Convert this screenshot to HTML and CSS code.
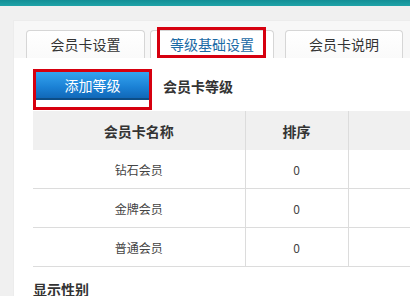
FILE: index.html
```html
<!DOCTYPE html>
<html lang="zh-CN">
<head>
	<meta charset="UTF-8">
	<meta name="viewport" content="width=device-width, initial-scale=1.0">
	<title>等级基础设置</title>
	<link rel="stylesheet" href="styles.css">
</head>
<body>
	<div class="topbar"></div>
	<div class="wrap">
		<div class="panel">
			<div class="tabs">
				<div class="tab tab-first">会员卡设置</div>
				<div class="tab active">等级基础设置<span class="mark"></span></div>
				<div class="tab tab-last">会员卡说明</div>
			</div>
			<div class="content">
				<div class="toolbar">
					<div class="btn-mark">
						<button class="btn-add">添加等级</button>
					</div>
					<span class="toolbar-title">会员卡等级</span>
				</div>
				<table class="levels">
					<colgroup>
						<col class="col-name">
						<col class="col-sort">
						<col class="col-ops">
					</colgroup>
					<thead>
						<tr>
							<th>会员卡名称</th>
							<th>排序</th>
							<th></th>
						</tr>
					</thead>
					<tbody>
						<tr><td>钻石会员</td><td>0</td><td></td></tr>
						<tr><td>金牌会员</td><td>0</td><td></td></tr>
						<tr><td>普通会员</td><td>0</td><td></td></tr>
					</tbody>
				</table>
				<h3 class="section">显示性别</h3>
			</div>
		</div>
	</div>
</body>
</html>
```

FILE: styles.css
```css
html, body {
	margin: 0;
	padding: 0;
	overflow: hidden;
}

body {
	font-family: "Noto Sans CJK SC", "Liberation Sans", sans-serif;
	background-color: #f0f0f0;
	color: #333;
	width: 410px;
	height: 296px;
}

.topbar {
	height: 6px;
	background: linear-gradient(#138f96, #1fa3a8);
}

.wrap {
	padding: 14px 0 0 13px;
}

.panel {
	background-color: #f7f7f7;
	border-top: 1px solid #ececec;
	border-left: 1px solid #ececec;
}

.tabs {
	display: flex;
	gap: 5px;
	padding: 9px 0 0 12px;
}

.tab {
	position: relative;
	width: 117px;
	height: 27px;
	line-height: 26px;
	text-align: center;
	font-size: 14px;
	color: #333;
	background: linear-gradient(#ffffff, #fafafa);
	border: 1px solid #d6d6d6;
	border-bottom: none;
	border-radius: 4px 4px 0 0;
	flex-shrink: 0;
}

.tab.active {
	width: 122px;
	color: #1b6aa5;
	background: #fff;
}

.tab-last {
	width: 116px;
	margin-left: 6px;
}

.mark {
	position: absolute;
	left: 6px;
	top: -4px;
	width: 103px;
	height: 25px;
	border: 3px solid #d6000f;
}

.content {
	background-color: #fff;
	padding: 11px 0 0 19px;
	height: 260px;
}

.toolbar {
	display: flex;
	align-items: center;
	gap: 11px;
}

.btn-mark {
	border: 3px solid #d6000f;
	padding: 0 0 7px 0;
	background: #fff;
	width: 113px;
}

.btn-add {
	display: block;
	width: 113px;
	height: 28px;
	border: none;
	border-bottom: 2px solid #0c4d86;
	padding: 0;
	background: linear-gradient(#34a4f0, #1a80d4 60%, #1168b8);
	color: #fff;
	font-family: inherit;
	font-size: 14px;
	line-height: 26px;
}

.toolbar-title {
	font-size: 14px;
	font-weight: bold;
	color: #333;
	margin-bottom: 7px;
}

.levels {
	border-collapse: collapse;
	table-layout: fixed;
	width: 470px;
	margin-top: 1px;
}

.col-name {
	width: 212px;
}

.col-sort {
	width: 103px;
}

.levels th {
	height: 39px;
	padding: 0;
	background-color: #f0f0f0;
	font-size: 14px;
	font-weight: bold;
	color: #333;
	border-left: 1px solid #dcdcdc;
}

.levels td {
	height: 38px;
	padding: 0;
	text-align: center;
	font-size: 12px;
	color: #444;
	border-bottom: 1px solid #dcdcdc;
	border-left: 1px solid #dcdcdc;
}

.levels th:first-child,
.levels td:first-child {
	border-left: none;
}

.section {
	margin: 12px 0 0 0;
	font-size: 14px;
	font-weight: bold;
	color: #333;
}
```
